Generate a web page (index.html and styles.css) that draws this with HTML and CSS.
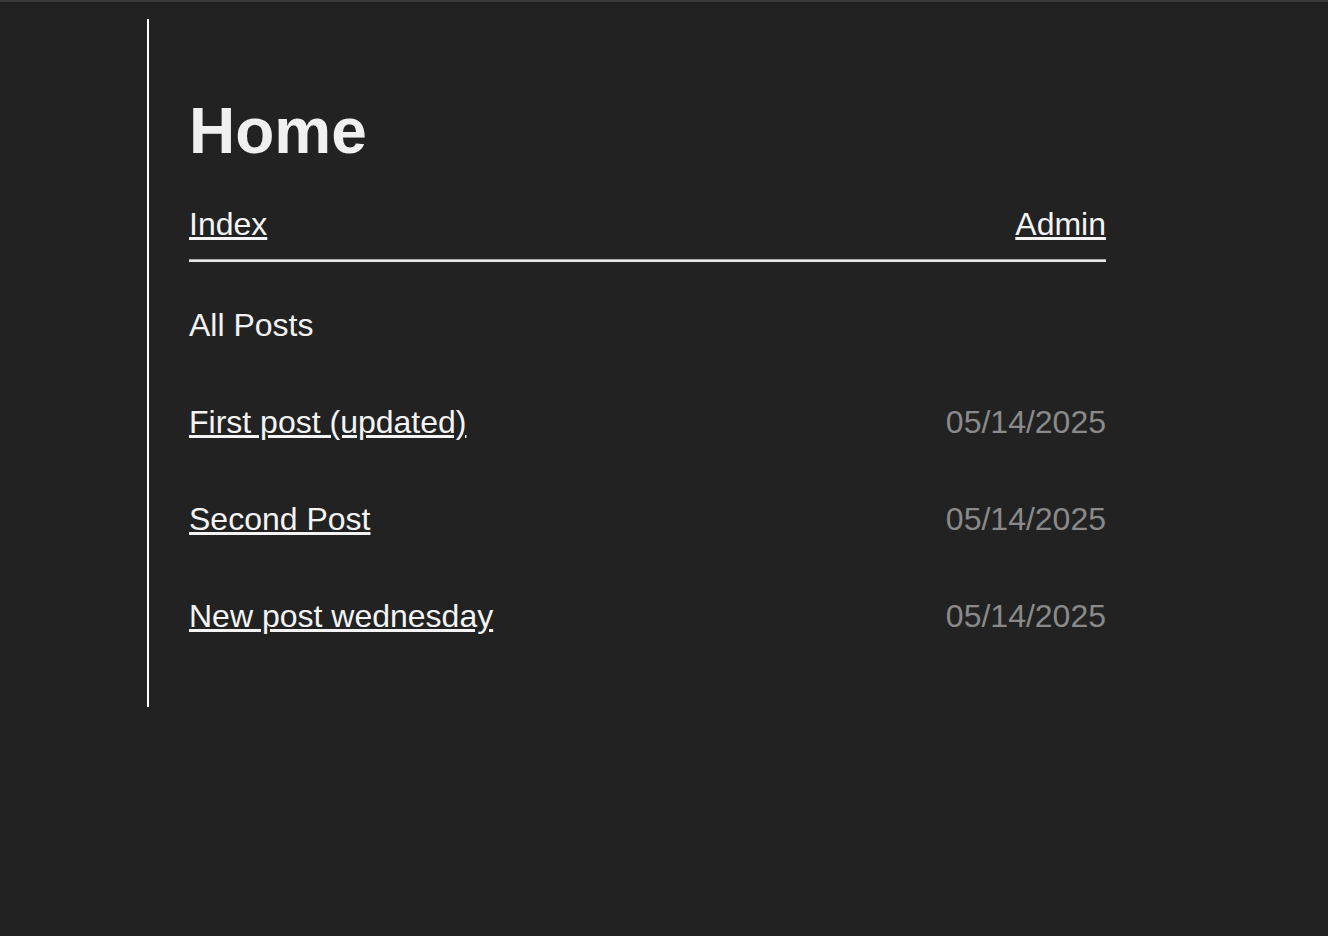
FILE: index.html
```html
<!DOCTYPE html>
<html lang="en">
<head>
<meta charset="utf-8">
<title>Home</title>
<link rel="stylesheet" href="styles.css">
</head>
<body>
<div class="topbar"></div>
<main class="page">
  <h1 class="title">Home</h1>
  <nav class="nav">
    <a href="#">Index</a>
    <a href="#">Admin</a>
  </nav>
  <div class="rule"></div>
  <h2 class="section">All Posts</h2>
  <ul class="posts">
    <li class="post"><a href="#">First post (updated)</a><span class="date">05/14/2025</span></li>
    <li class="post"><a href="#">Second Post</a><span class="date">05/14/2025</span></li>
    <li class="post"><a href="#">New post wednesday</a><span class="date">05/14/2025</span></li>
  </ul>
</main>
</body>
</html>
```

FILE: styles.css
```css
html, body {
  margin: 0;
  padding: 0;
  background: #222222;
}

body {
  font-family: "Liberation Sans", Arial, Helvetica, sans-serif;
  color: #f2f2f2;
  font-size: 32px;
  line-height: 37px;
}

.topbar {
  height: 2px;
  background: #3a3a3a;
}

.page {
  margin: 17px 0 0 147px;
  width: 917px;
  border-left: 2px solid #ffffff;
  padding: 75px 0 72px 40px;
}

.title {
  margin: 0;
  font-size: 64px;
  line-height: 74px;
  font-weight: 700;
  color: #f0f0f0;
}

.nav {
  display: flex;
  justify-content: space-between;
  margin-top: 38px;
}

a {
  color: #f4f4f4;
  text-decoration: underline;
}

.rule {
  margin-top: 16px;
  height: 2px;
  border-top: 1px solid #a8a8a8;
  background: #e6e6e6;
}

.section {
  margin: 45px 0 0;
  font-size: 32px;
  font-weight: 400;
  line-height: 37px;
  color: #f2f2f2;
}

.posts {
  list-style: none;
  margin: 0;
  padding: 0;
  display: flex;
  flex-direction: column;
}

.post {
  display: flex;
  justify-content: space-between;
  margin-top: 60px;
}

.date {
  color: #8a8a8a;
}
```
